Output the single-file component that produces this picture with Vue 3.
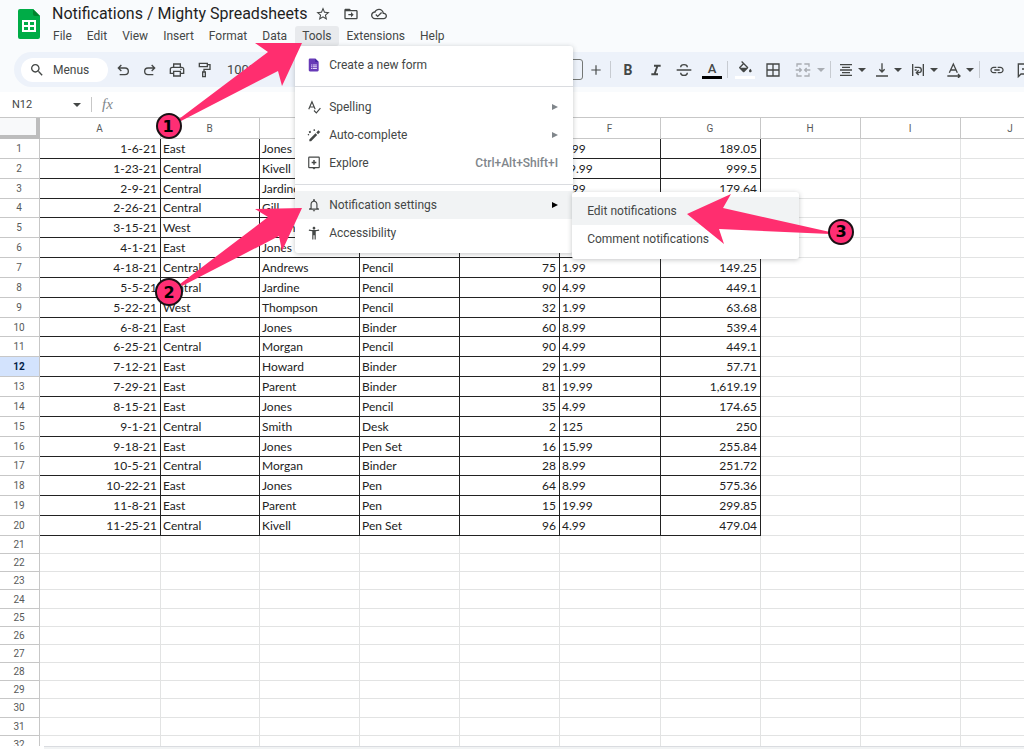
<script setup>
const columns = ['A', 'B', 'C', 'D', 'E', 'F', 'G', 'H', 'I', 'J']

const records = [
  ['1-6-21', 'East', 'Jones', '', '', '1.99', '189.05'],
  ['1-23-21', 'Central', 'Kivell', '', '', '19.99', '999.5'],
  ['2-9-21', 'Central', 'Jardine', '', '', '4.99', '179.64'],
  ['2-26-21', 'Central', 'Gill', '', '', '', ''],
  ['3-15-21', 'West', 'Sorvino', '', '', '', ''],
  ['4-1-21', 'East', 'Jones', '', '', '', ''],
  ['4-18-21', 'Central', 'Andrews', 'Pencil', '75', '1.99', '149.25'],
  ['5-5-21', 'Central', 'Jardine', 'Pencil', '90', '4.99', '449.1'],
  ['5-22-21', 'West', 'Thompson', 'Pencil', '32', '1.99', '63.68'],
  ['6-8-21', 'East', 'Jones', 'Binder', '60', '8.99', '539.4'],
  ['6-25-21', 'Central', 'Morgan', 'Pencil', '90', '4.99', '449.1'],
  ['7-12-21', 'East', 'Howard', 'Binder', '29', '1.99', '57.71'],
  ['7-29-21', 'East', 'Parent', 'Binder', '81', '19.99', '1,619.19'],
  ['8-15-21', 'East', 'Jones', 'Pencil', '35', '4.99', '174.65'],
  ['9-1-21', 'Central', 'Smith', 'Desk', '2', '125', '250'],
  ['9-18-21', 'East', 'Jones', 'Pen Set', '16', '15.99', '255.84'],
  ['10-5-21', 'Central', 'Morgan', 'Binder', '28', '8.99', '251.72'],
  ['10-22-21', 'East', 'Jones', 'Pen', '64', '8.99', '575.36'],
  ['11-8-21', 'East', 'Parent', 'Pen', '15', '19.99', '299.85'],
  ['11-25-21', 'Central', 'Kivell', 'Pen Set', '96', '4.99', '479.04'],
]

const selectedRow = 12
const emptyRows = Array.from({ length: 12 }, (_, i) => records.length + 1 + i)
const rightAligned = [0, 4, 6]
const blankColumns = columns.length - 7
</script>

<template>
  <div class="app">
    <header class="top">
      <div class="masthead">
        <svg class="logo" viewBox="0 0 22 30" aria-hidden="true">
          <path d="M2 0h13l7 7v21a2 2 0 0 1-2 2H2a2 2 0 0 1-2-2V2a2 2 0 0 1 2-2z" fill="#00ac47" />
          <path d="M15 0l7 7h-5a2 2 0 0 1-2-2z" fill="#00832d" />
          <path d="M4 11h14v12H4zM6 13v3h4v-3zM12 13v3h4v-3zM6 18v3h4v-3zM12 18v3h4v-3z" fill="#fff" fill-rule="evenodd" />
        </svg>
        <div class="heading">
          <div class="title-row">
            <h1>Notifications / Mighty Spreadsheets</h1>
            <button aria-label="Star">
              <svg viewBox="0 0 24 24"><path d="M22 9.24l-7.19-.62L12 2 9.19 8.63 2 9.24l5.46 4.73L5.82 21 12 17.27 18.18 21l-1.63-7.03L22 9.24zM12 15.4l-3.76 2.27 1-4.28-3.32-2.88 4.38-.38L12 6.1l1.71 4.04 4.38.38-3.32 2.88 1 4.28L12 15.4z" /></svg>
            </button>
            <button aria-label="Move">
              <svg viewBox="0 0 24 24"><path d="M20 6h-8l-2-2H4c-1.1 0-2 .9-2 2v12c0 1.100.9 2 2 2h16c1.100 0 2-.9 2-2V8c0-1.100-.9-2-2-2zm0 12H4V8h16v10zM12 17l4-4-4-4v3H8v2h4z" /></svg>
            </button>
            <button aria-label="Document status">
              <svg viewBox="0 0 24 24"><path d="M19.350 10.040C18.670 6.590 15.640 4 12 4 9.110 4 6.600 5.640 5.350 8.040 2.340 8.360 0 10.910 0 14c0 3.310 2.690 6 6 6h13c2.760 0 5-2.240 5-5 0-2.640-2.050-4.780-4.650-4.960zM19 18H6c-2.210 0-4-1.790-4-4s1.790-4 4-4h.71C7.370 7.690 9.480 6 12 6c3.040 0 5.500 2.460 5.500 5.500v.5H19c1.660 0 3 1.340 3 3s-1.340 3-3 3zM10 17l-3.500-3.500 1.410-1.410L10 14.170 15.180 9l1.410 1.410z" /></svg>
            </button>
          </div>
          <nav class="menubar" aria-label="Main menu">
            <button>File</button>
            <button>Edit</button>
            <button>View</button>
            <button>Insert</button>
            <button>Format</button>
            <button>Data</button>
            <div class="open-menu">
              <button class="active">Tools</button>
              <div class="menu" role="menu">
                <button class="item" role="menuitem">
                  <svg viewBox="0 0 24 24"><path d="M5 1h9l6 6v14a2 2 0 0 1-2 2H5a2 2 0 0 1-2-2V3a2 2 0 0 1 2-2z" fill="#673ab7" /><path d="M14 1l6 6h-6z" fill="#4527a0" /><path d="M7 11h2v2H7zM10 11h7v2h-7zM7 14h2v2H7zM10 14h7v2h-7zM7 17h2v2H7zM10 17h7v2h-7z" fill="#e3d7f7" /></svg>
                  <span>Create a new form</span>
                </button>
                <hr />
                <button class="item" role="menuitem">
                  <svg viewBox="0 0 24 24" class="line"><path d="M3 16L8.500 3 14 16M5 12h7M12 18l4 4 7-8" /></svg>
                  <span>Spelling</span><i class="more"></i>
                </button>
                <button class="item" role="menuitem">
                  <svg viewBox="0 0 24 24"><path d="M4 19.500L14.500 9l3 3L7 22.500H4zM16 7.500l3.500-3.500 3 3L19 10.500zM3 6l3-1.500 1 3L4 9zM11 2.500l2.500-.5.5 2.500-2.500.5zM1 11l2-1 1 2-2 1z" /></svg>
                  <span>Auto-complete</span><i class="more"></i>
                </button>
                <button class="item" role="menuitem">
                  <svg viewBox="0 0 24 24" class="line"><rect x="3" y="2" width="18" height="18" rx="1" /><path d="M12 7v8M8 11h8" stroke-width="2.500" /><path d="M9 20h6l-3 3z" fill="currentColor" stroke="none" /></svg>
                  <span>Explore</span><kbd>Ctrl+Alt+Shift+I</kbd>
                </button>
                <hr />
                <div class="submenu-host">
                  <button class="item hover" role="menuitem" aria-expanded="true">
                    <svg viewBox="0 0 24 24"><path d="M12 23c1.100 0 2-.9 2-2h-4c0 1.100.9 2 2 2zm6-6v-6c0-3.070-1.630-5.640-4.500-6.320V3c0-.83-.67-1.500-1.500-1.500s-1.500.67-1.500 1.500v1.680C7.640 5.360 6 7.920 6 11v6l-2.500 1v2h17v-2zm-2 1H8v-7c0-2.480 1.510-4.500 4-4.500s4 2.020 4 4.500z" /></svg>
                    <span>Notification settings</span><i class="more dark"></i>
                  </button>
                  <div class="menu submenu" role="menu">
                    <button class="item hover" role="menuitem">Edit notifications</button>
                    <button class="item" role="menuitem">Comment notifications</button>
                  </div>
                </div>
                <button class="item" role="menuitem">
                  <svg viewBox="0 0 24 24"><path d="M20.500 6c-2.610.7-5.670 1-8.500 1s-5.890-.3-8.500-1L3 8c1.860.5 4 .83 6 1v14h2v-7h2v7h2V9c2-.17 4.140-.5 6-1l-.5-2zM12 6c1.300 0 2.300-1 2.300-2.300S13.300 1.400 12 1.400 9.700 2.400 9.700 3.700 10.700 6 12 6z" /></svg>
                  <span>Accessibility</span>
                </button>
              </div>
            </div>
            <button>Extensions</button>
            <button>Help</button>
          </nav>
        </div>
      </div>

      <div class="toolbar" role="toolbar" aria-label="Formatting">
        <button class="search">
          <svg viewBox="0 0 24 24"><path d="M15.500 14h-.79l-.28-.27C15.410 12.590 16 11.110 16 9.500 16 5.910 13.090 3 9.500 3S3 5.910 3 9.500 5.910 16 9.500 16c1.610 0 3.090-.59 4.230-1.570l.27.28v.79l5 4.990L20.490 19l-4.990-5zm-6 0C7.010 14 5 11.990 5 9.500S7.010 5 9.500 5 14 7.010 14 9.500 11.990 14 9.500 14z" /></svg>
          <span>Menus</span>
        </button>
        <button class="tool small" aria-label="Undo"><svg viewBox="0 0 24 24" class="line"><path d="M5 9h10a5 5 0 0 1 0 10H7M9.500 4.500L5 9l4.500 4.500" /></svg></button>
        <button class="tool small" aria-label="Redo"><svg viewBox="0 0 24 24" class="line"><path d="M19 9H9a5 5 0 0 0 0 10h8M14.500 4.500L19 9l-4.500 4.500" /></svg></button>
        <button class="tool small" aria-label="Print"><svg viewBox="0 0 24 24" class="line"><path d="M7 8V3h10v5M6 17H2v-6a3 3 0 0 1 3-3h14a3 3 0 0 1 3 3v6h-4M7 14h10v7H7z" /><path d="M17 11h2" /></svg></button>
        <button class="tool small" aria-label="Paint format"><svg viewBox="0 0 24 24" class="line"><path d="M5 2h12v5H5zM17 4h4v7h-9v4" /><path d="M10 15h4v7h-4z" /></svg></button>
        <button class="zoom">100%</button>
        <div class="spacer"></div>
        <input class="font-size" type="text" aria-label="Font size" />
        <button class="tool plus" aria-label="Increase font size"><svg viewBox="0 0 24 24" class="line"><path d="M12 4v16M4 12h16" /></svg></button>
        <span class="sep"></span>
        <button class="tool letter" aria-label="Bold">B</button>
        <button class="tool" aria-label="Italic"><svg viewBox="0 0 24 24"><path d="M9 4v3h3.200l-3.400 10H5v3h10v-3h-3.200l3.400-10H19V4z" /></svg></button>
        <button class="tool" aria-label="Strikethrough"><svg viewBox="0 0 24 24" class="line"><path d="M1 12h22M17 8c0-2-2-4-5-4S7 5.500 7 8M7 16c0 2.500 2 4 5 4s5-1.500 5-4" /></svg></button>
        <button class="tool swatch ink" aria-label="Text colour"><span>A</span></button>
        <span class="sep"></span>
        <button class="tool swatch fill" aria-label="Fill colour"><svg viewBox="0 0 24 18"><path d="M16.560 8.940L7.620 0 6.210 1.410l2.380 2.380-5.150 5.150c-.59.59-.59 1.540 0 2.120l5.500 5.500c.29.29.68.44 1.060.44s.77-.15 1.060-.44l5.500-5.500c.59-.58.59-1.530 0-2.120zM5.210 10L10 5.210 14.790 10H5.210zM20 11.500s-2 2.170-2 3.500c0 1.100.9 2 2 2s2-.9 2-2c0-1.330-2-3.500-2-3.500z" /></svg></button>
        <button class="tool" aria-label="Borders"><svg viewBox="0 0 24 24" class="line"><path d="M3 3h18v18H3zM12 3v18M3 12h18" /></svg></button>
        <button class="dd merge" aria-label="Merge cells"><svg viewBox="0 0 24 24" class="line"><path d="M10 3H3v4M3 17v4h7M14 3h7v4M21 17v4h-7M1 12h8M6.500 9l3 3-3 3M23 12h-8M17.500 9l-3 3 3 3" /></svg><i class="caret"></i></button>
        <span class="sep"></span>
        <button class="dd" aria-label="Horizontal align"><svg viewBox="0 0 24 24" class="line"><path d="M3 4h18M6 8h12M3 12h18M6 16h12M3 20h18" /></svg><i class="caret"></i></button>
        <button class="dd" aria-label="Vertical align"><svg viewBox="0 0 24 24" class="line"><path d="M12 2v13M8 11l4 4 4-4M3 21h18" /></svg><i class="caret"></i></button>
        <button class="dd" aria-label="Text wrapping"><svg viewBox="0 0 24 24" class="line"><path d="M4 3v18M20 3v18M7 12h3M7 8h6a4 4 0 0 1 0 8h-3M13 12.500L9.500 16l3.500 3.500" /></svg><i class="caret"></i></button>
        <button class="dd" aria-label="Text rotation"><svg viewBox="0 0 24 24" class="line"><path d="M5 16l6-13 6 13M7 12h8M2 21h19M18 18l3 3-3 3" /></svg><i class="caret"></i></button>
        <span class="sep"></span>
        <button class="tool" aria-label="Insert link"><svg viewBox="0 0 24 24"><path d="M3.900 12c0-1.710 1.390-3.100 3.100-3.100h4V7H7c-2.760 0-5 2.240-5 5s2.240 5 5 5h4v-1.900H7c-1.710 0-3.100-1.390-3.100-3.100zM8 13h8v-2H8v2zm9-6h-4v1.900h4c1.710 0 3.100 1.390 3.100 3.100s-1.390 3.100-3.100 3.100h-4V17h4c2.760 0 5-2.240 5-5s-2.240-5-5-5z" /></svg></button>
        <button class="tool" aria-label="Insert comment"><svg viewBox="0 0 24 24" class="line"><path d="M2 3h20v15H6l-4 4zM12 6v9M7.500 10.500h9" /></svg></button>
      </div>
    </header>

    <div class="formula-bar">
      <input class="name-box" type="text" value="N12" aria-label="Name box" />
      <button class="name-drop" aria-label="Named ranges"><i class="caret"></i></button>
      <label class="fx" for="formula">fx</label>
      <input id="formula" class="formula" type="text" />
    </div>

    <main class="sheet">
      <table>
        <colgroup>
          <col class="c-head" /><col class="c-a" /><col class="c-b" /><col /><col /><col /><col class="c-f" /><col /><col /><col /><col />
        </colgroup>
        <thead>
          <tr>
            <th class="corner"></th>
            <th v-for="c in columns" :key="c" scope="col">{{ c }}</th>
          </tr>
        </thead>
        <tbody class="filled">
          <tr v-for="(row, r) in records" :key="r">
            <th scope="row" :class="{ selected: r + 1 === selectedRow }">{{ r + 1 }}</th>
            <td v-for="(cell, i) in row" :key="i" class="data" :class="{ num: rightAligned.includes(i) }">{{ cell }}</td>
            <td v-for="n in blankColumns" :key="'b' + n"></td>
          </tr>
        </tbody>
        <tbody class="empty">
          <tr v-for="n in emptyRows" :key="n">
            <th scope="row">{{ n }}</th>
            <td v-for="c in columns" :key="c"></td>
          </tr>
        </tbody>
      </table>
    </main>
    <div class="scroll-track"></div>

    <svg class="callouts" width="900" height="320" viewBox="0 0 900 320" aria-hidden="true">
      <g class="arrow">
        <path d="M302 43H255L268 52 179 119 181 121 278 71 282 86z" />
        <path d="M302 208L255 209 268 217 180 284 182 286 279 236 282 251z" />
        <path d="M687 214L731 194 723 208 830 232V234L719 229 724 244z" />
      </g>
      <g class="badge">
        <circle cx="169" cy="126" r="12" />
        <circle cx="169" cy="292" r="13" />
        <circle cx="841" cy="232" r="12" />
      </g>
      <g class="digit">
        <text x="168" y="132">1</text>
        <text x="169" y="298">2</text>
        <text x="841" y="237">3</text>
      </g>
    </svg>
  </div>
</template>

<style>
html,
body {
  margin: 0;
  overflow: hidden;
}
</style>

<style scoped>
.app {
  position: relative;
  display: flex;
  flex-direction: column;
  height: 100vh;
  overflow: hidden;
  background: #fff;
  color: #444746;
  font-family: Roboto, "Liberation Sans", sans-serif;
  font-size: 12px;
}

button,
input {
  box-sizing: border-box;
  margin: 0;
  padding: 0;
  border: 0;
  background: none;
  color: inherit;
  font: inherit;
}

svg {
  display: block;
  flex: none;
  fill: currentColor;
}

.line {
  fill: none;
  stroke: currentColor;
  stroke-width: 2;
}

.top {
  flex: none;
  background: #f9fbfd;
  padding-bottom: 5px;
}

.masthead {
  display: flex;
  height: 52px;
}

.logo {
  width: 22px;
  height: 30px;
  margin: 9px 6px 0 18px;
}

.title-row {
  display: flex;
  align-items: center;
  gap: 12px;
  height: 26px;
  padding: 2px 0 0 6px;
  box-sizing: border-box;
}

h1 {
  margin: 0 -4px 0 0;
  color: #1f1f1f;
  font-size: 16px;
  font-weight: 400;
  line-height: 22px;
  white-space: nowrap;
}

.title-row svg {
  width: 16px;
  height: 16px;
}

.menubar {
  display: flex;
  gap: 1px;
}

.menubar > button,
.active {
  height: 20px;
  padding: 0 7px;
  border-radius: 3px;
  line-height: 20px;
}

.active {
  background: #e8eaed;
}

.open-menu,
.submenu-host {
  position: relative;
}

.menu {
  position: absolute;
  z-index: 2;
  top: 100%;
  left: 0;
  width: 278px;
  box-sizing: border-box;
  padding: 5px 0 6px;
  border-radius: 3px;
  background: #fff;
  box-shadow: 0 1px 5px rgba(60, 64, 67, 0.3);
}

.submenu {
  top: 1px;
  left: 277px;
  width: 227px;
}

.item {
  display: flex;
  align-items: center;
  width: 100%;
  height: 28px;
  padding: 0 15px;
  text-align: left;
  white-space: nowrap;
}

.menu > .item svg,
.submenu-host > .item svg {
  width: 14px;
  height: 14px;
  margin: 0 8px 0 -3px;
}

.item span {
  flex: 1;
}

.hover {
  background: #f1f3f4;
}

hr {
  height: 1px;
  margin: 7px 0 6px;
  border: 0;
  background: #dadce0;
}

.more {
  border: solid transparent;
  border-width: 3px 0 3px 6px;
  border-left-color: #80868b;
}

.dark {
  border-left-color: #000;
}

kbd {
  color: #80868b;
  font-family: inherit;
  font-size: 12px;
  font-weight: 500;
}

.toolbar {
  display: flex;
  align-items: center;
  height: 35px;
  margin-left: 14px;
  padding-left: 7px;
  overflow: hidden;
  border-radius: 18px 0 0 18px;
  background: #edf2fa;
}

.search {
  display: flex;
  flex: none;
  align-items: center;
  gap: 8px;
  width: 87px;
  height: 24px;
  margin-right: 1px;
  padding-left: 8px;
  border-radius: 12px;
  background: #fff;
}

.tool {
  display: flex;
  flex: none;
  align-items: center;
  justify-content: center;
  width: 28px;
  height: 24px;
}

.small {
  width: 27px;
}

.plus {
  width: 26px;
}

.toolbar svg {
  width: 16px;
  height: 16px;
}

.toolbar .plus svg {
  width: 14px;
  height: 14px;
}

.zoom {
  flex: none;
  width: 40px;
  margin-left: 10px;
  font-size: 13px;
  text-align: left;
}

.spacer {
  flex: none;
  width: 288px;
}

.font-size {
  flex: none;
  width: 28px;
  height: 21px;
  border: 1px solid #747775;
  border-radius: 3px;
}

.sep {
  flex: none;
  width: 1px;
  height: 17px;
  margin: 0 3px 0 1px;
  background: #c7cbd1;
}

.letter {
  font-size: 14px;
  font-weight: 700;
}

.swatch {
  flex-direction: column;
  justify-content: flex-end;
  font-size: 13px;
  font-weight: 500;
}

.swatch span {
  line-height: 15px;
}

.swatch::after {
  width: 20px;
  height: 3px;
  margin-bottom: 3px;
  content: "";
}

.toolbar .fill svg {
  height: 12px;
  margin-bottom: 3px;
}

.ink::after {
  background: #000;
}

.fill::after {
  background: #fff;
}

.dd {
  display: flex;
  flex: none;
  align-items: center;
  gap: 4px;
  width: 36px;
  padding-left: 4px;
}

.merge {
  gap: 6px;
  width: 42px;
  padding-left: 8px;
  color: #a9adb3;
}

.caret {
  border: solid transparent;
  border-width: 4px 4px 0;
  border-top-color: currentColor;
}

.formula-bar {
  display: flex;
  flex: none;
  align-items: center;
  height: 25px;
  border-bottom: 1px solid #c7c7c7;
}

.name-box {
  width: 72px;
  padding-left: 12px;
  font-size: 11px;
}

.name-drop {
  display: flex;
  align-items: center;
  justify-content: flex-end;
  width: 20px;
  height: 15px;
  padding-right: 10px;
  border-right: 1px solid #c7c7c7;
}

.fx {
  margin-left: 10px;
  color: #80868b;
  font: italic 15px/17px "Liberation Serif", serif;
}

.formula {
  flex: 1;
  margin-left: 8px;
}

.sheet {
  flex: 1;
  min-height: 0;
  overflow: hidden;
}

table {
  width: 1061px;
  table-layout: fixed;
  border-collapse: separate;
  border-spacing: 0;
}

col {
  width: 100px;
}

.c-head {
  width: 40px;
}

.c-a {
  width: 121px;
}

.c-b {
  width: 99px;
}

.c-f {
  width: 101px;
}

th,
td {
  box-sizing: border-box;
  padding: 0 3px 0 2px;
  overflow: hidden;
  border: solid #e2e3e3;
  border-width: 0 1px 1px 0;
  line-height: 17px;
  white-space: nowrap;
}

th {
  border-color: #c7c7c7;
  color: #575a5a;
  font-size: 10px;
  font-weight: 400;
  text-align: center;
}

thead th {
  height: 21px;
}

.corner {
  border: solid #bdbdbd;
  border-width: 0 4px 4px 0;
  background: #f8f9fa;
}

.filled {
  height: 397px;
}

.empty {
  height: 218px;
}

.data {
  border-color: #222;
  color: #222;
  font-family: Lato, "Open Sans", sans-serif;
  font-size: 12px;
}

.num {
  text-align: right;
}

.selected {
  background: #d3e3fd;
  color: #041e49;
  font-weight: 700;
}

.scroll-track {
  flex: none;
  height: 2px;
  margin-left: 44px;
  border-top: 1px solid #dadce0;
  background: #f1f3f4;
}

.callouts {
  position: absolute;
  z-index: 5;
  top: 0;
  left: 0;
  pointer-events: none;
}

.arrow {
  fill: #ff2e6f;
}

.badge {
  fill: #ff2e74;
  stroke: #1a1014;
  stroke-width: 2;
}

.digit {
  fill: #000;
  font: 700 16px "DejaVu Sans", sans-serif;
  text-anchor: middle;
}
</style>
